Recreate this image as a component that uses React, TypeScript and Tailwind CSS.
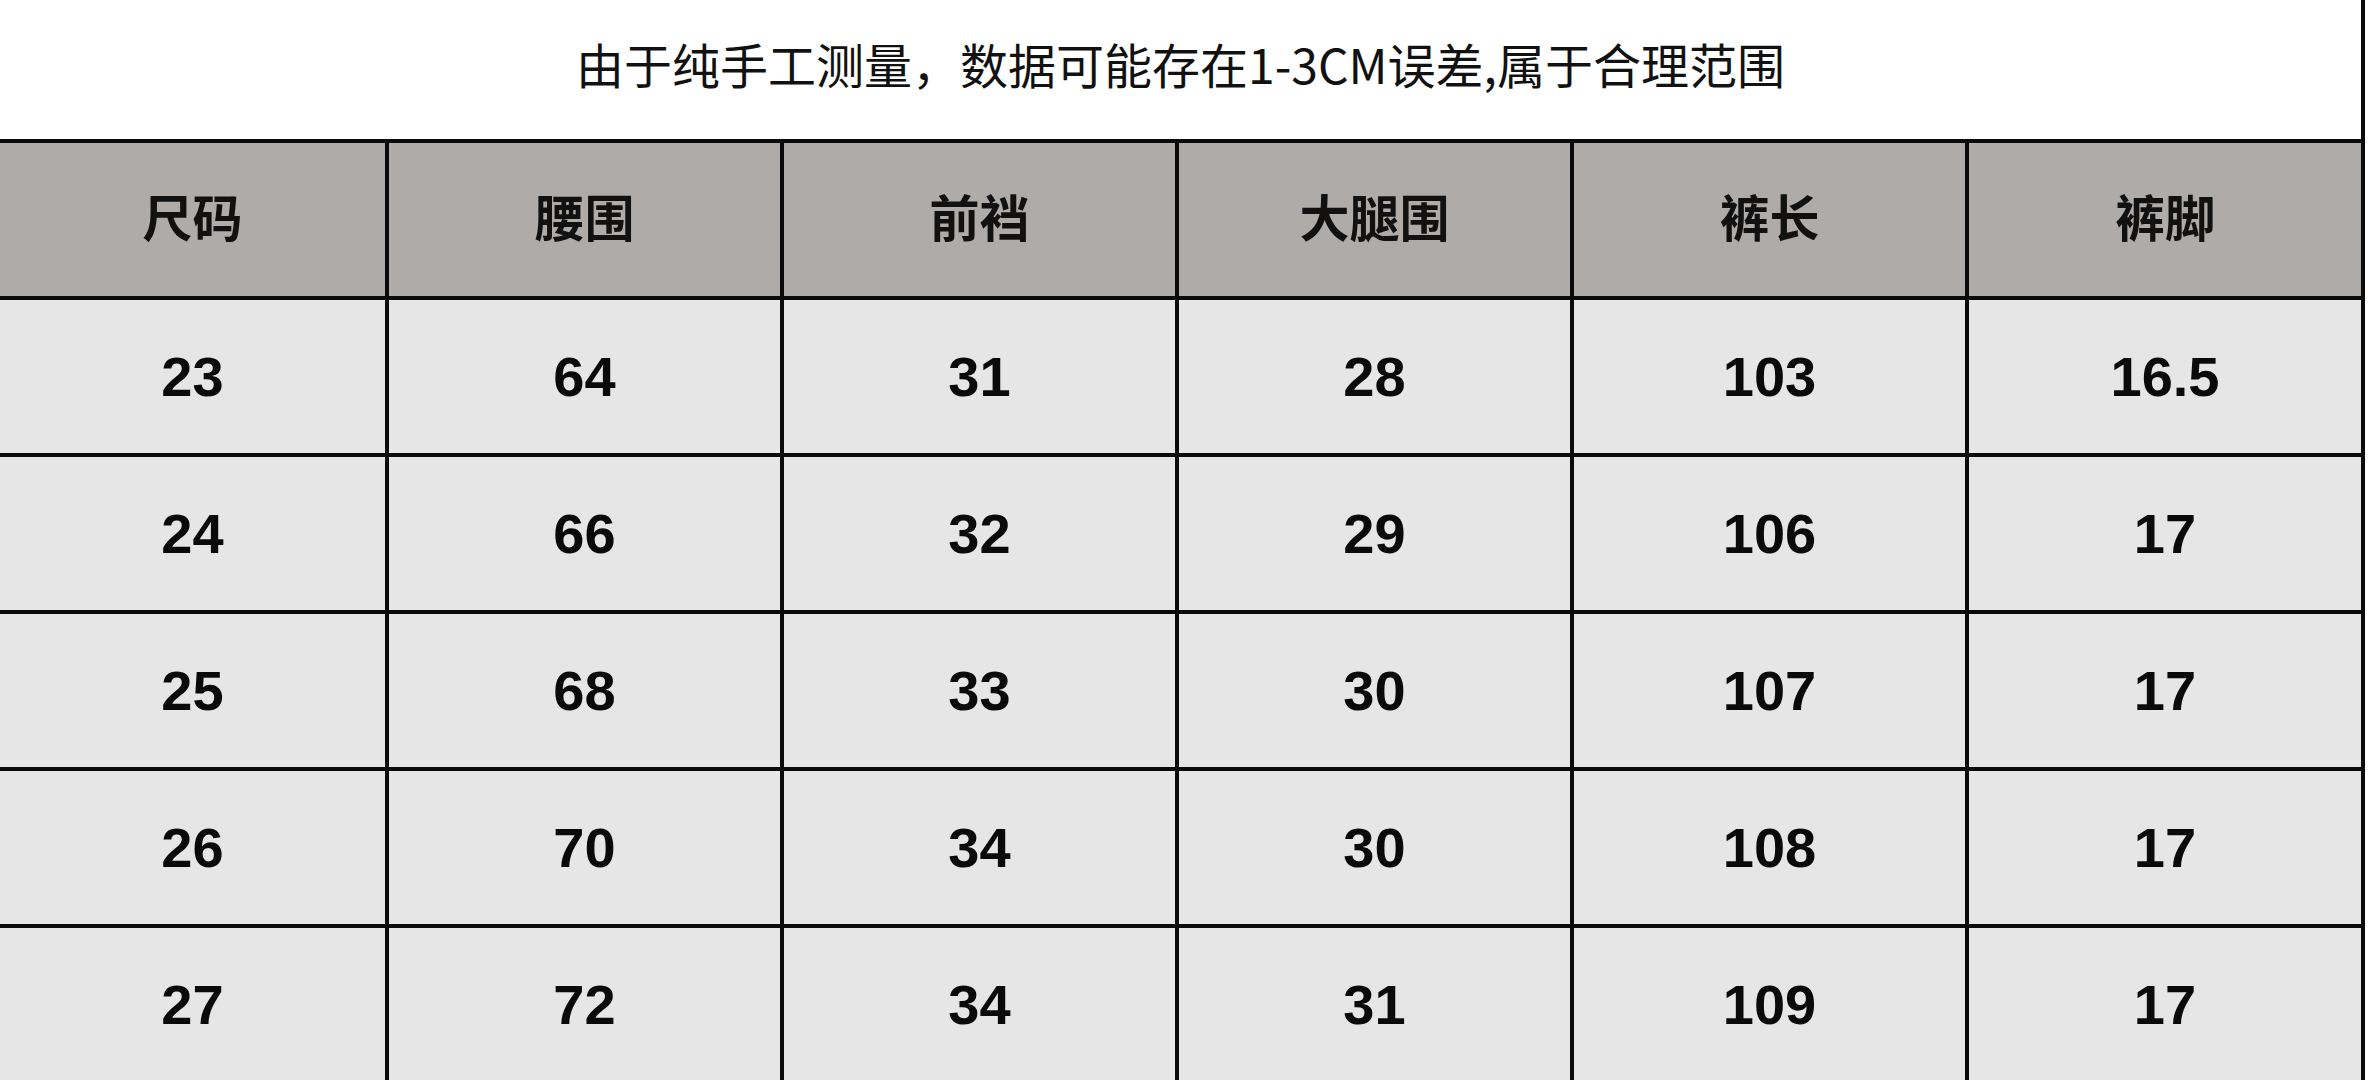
import React from "react";

const headers = ["尺码", "腰围", "前裆", "大腿围", "裤长", "裤脚"];
const rows = [
  ["23", "64", "31", "28", "103", "16.5"],
  ["24", "66", "32", "29", "106", "17"],
  ["25", "68", "33", "30", "107", "17"],
  ["26", "70", "34", "30", "108", "17"],
  ["27", "72", "34", "31", "109", "17"],
];

export default function App() {
  return (
    <div className="w-[2368px] h-[1080px] bg-white overflow-hidden">
      <div className="w-[2365px] h-[1080px] border-r-[4px] border-[#0a0a0a]">
        <div className="h-[139px] flex items-center justify-center pb-[14px]">
          <span
            className="text-[48px] leading-none text-[#111]"
            style={{ fontFamily: '"Noto Sans CJK SC", "Noto Sans", sans-serif' }}
          >
            由于纯手工测量，数据可能存在1-3CM误差,属于合理范围
          </span>
        </div>
        <div
          className="grid grid-cols-[389px_395px_395px_395px_395px_1fr] h-[157px] border-t-[4px] border-[#0a0a0a] bg-[#aeaba9]"
          style={{ fontFamily: '"Liberation Sans", "Noto Sans CJK SC", sans-serif' }}
        >
          {headers.map((h, i) => (
            <div
              key={h}
              className={
                "flex items-center justify-center text-[50px] font-bold text-[#111] leading-none " +
                (i < 5 ? "border-r-[4px] border-[#0a0a0a]" : "")
              }
            >
              {h}
            </div>
          ))}
        </div>
        {rows.map((r, ri) => (
          <div
            key={ri}
            className="grid grid-cols-[389px_395px_395px_395px_395px_1fr] h-[157px] border-t-[4px] border-[#0a0a0a] bg-[#e6e6e6]"
            style={{ fontFamily: '"Liberation Sans", "Noto Sans CJK SC", sans-serif' }}
          >
            {r.map((v, i) => (
              <div
                key={i}
                className={
                  "flex items-center justify-center text-[56px] font-bold text-[#0a0a0a] leading-none " +
                  (i < 5 ? "border-r-[4px] border-[#0a0a0a]" : "")
                }
              >
                {v}
              </div>
            ))}
          </div>
        ))}
      </div>
    </div>
  );
}
